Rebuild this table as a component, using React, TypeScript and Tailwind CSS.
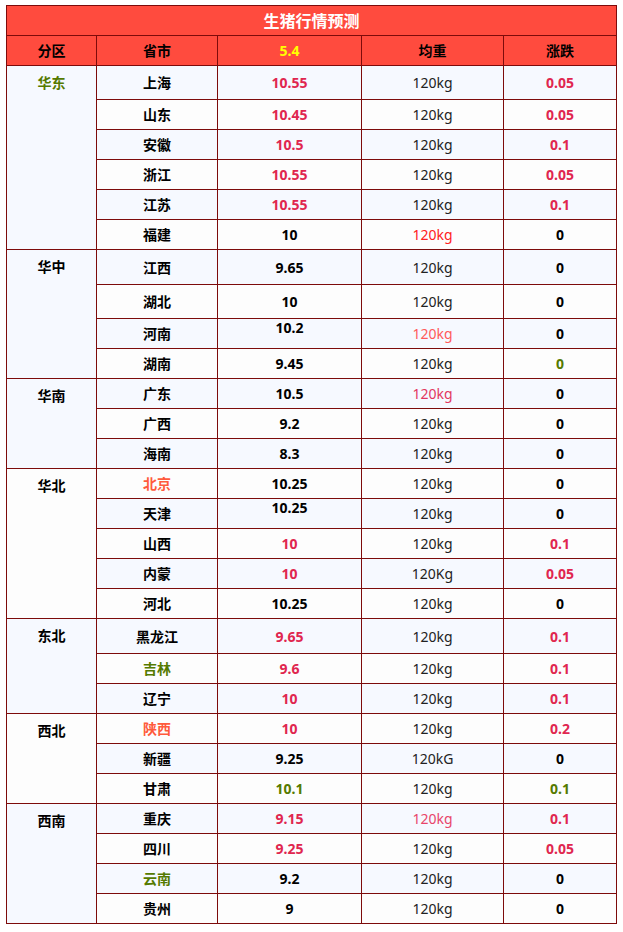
type Row = {
  p: string;
  pc?: string;
  price: string;
  prc?: string;
  w?: string;
  wc?: string;
  ch: string;
  chc?: string;
  h?: string;
  up?: boolean;
};

type Region = { name: string; color?: string; rows: Row[] };

const R = "text-[#e0264f]";
const G = "text-[#557a00]";
const DARK = "text-black";

const regions: Region[] = [
  {
    name: "华东",
    color: G,
    rows: [
      { p: "上海", price: "10.55", prc: R, ch: "0.05", chc: R, h: "h-[34px]" },
      { p: "山东", price: "10.45", prc: R, ch: "0.05", chc: R },
      { p: "安徽", price: "10.5", prc: R, ch: "0.1", chc: R },
      { p: "浙江", price: "10.55", prc: R, ch: "0.05", chc: R },
      { p: "江苏", price: "10.55", prc: R, ch: "0.1", chc: R },
      { p: "福建", price: "10", wc: "text-[#ff2020]", ch: "0" },
    ],
  },
  {
    name: "华中",
    rows: [
      { p: "江西", price: "9.65", ch: "0", h: "h-[35px]" },
      { p: "湖北", price: "10", ch: "0", h: "h-[34px]" },
      { p: "河南", price: "10.2", up: true, wc: "text-[#ff5a5a]", ch: "0" },
      { p: "湖南", price: "9.45", ch: "0", chc: G },
    ],
  },
  {
    name: "华南",
    rows: [
      { p: "广东", price: "10.5", wc: "text-[#e2375e]", ch: "0" },
      { p: "广西", price: "9.2", ch: "0" },
      { p: "海南", price: "8.3", ch: "0" },
    ],
  },
  {
    name: "华北",
    rows: [
      { p: "北京", pc: "text-[#ff5a3c]", price: "10.25", ch: "0" },
      { p: "天津", price: "10.25", up: true, ch: "0" },
      { p: "山西", price: "10", prc: R, ch: "0.1", chc: R },
      { p: "内蒙", price: "10", prc: R, w: "120Kg", ch: "0.05", chc: R },
      { p: "河北", price: "10.25", ch: "0" },
    ],
  },
  {
    name: "东北",
    rows: [
      { p: "黑龙江", price: "9.65", prc: R, ch: "0.1", chc: R, h: "h-[35px]" },
      { p: "吉林", pc: G, price: "9.6", prc: R, ch: "0.1", chc: R },
      { p: "辽宁", price: "10", prc: R, ch: "0.1", chc: R },
    ],
  },
  {
    name: "西北",
    rows: [
      { p: "陕西", pc: "text-[#ff5a3c]", price: "10", prc: R, ch: "0.2", chc: R },
      { p: "新疆", price: "9.25", w: "120kG", ch: "0" },
      { p: "甘肃", price: "10.1", prc: G, ch: "0.1", chc: G },
    ],
  },
  {
    name: "西南",
    rows: [
      { p: "重庆", price: "9.15", prc: R, wc: "text-[#e8456a]", ch: "0.1", chc: R },
      { p: "四川", price: "9.25", prc: R, ch: "0.05", chc: R },
      { p: "云南", pc: G, price: "9.2", ch: "0" },
      { p: "贵州", price: "9", ch: "0" },
    ],
  },
];

const cell = "border border-[#7d0b0b] text-center align-middle p-0";

export default function App() {
  let idx = 0;
  return (
    <div
      className="min-h-screen bg-white pl-[6px] pt-[5px]"
      style={{ fontFamily: '"Noto Sans", "Noto Sans CJK SC", sans-serif' }}
    >
      <table className="border-collapse table-fixed w-[610px] text-[14px] leading-[18px]">
        <colgroup>
          <col className="w-[90px]" />
          <col className="w-[121px]" />
          <col className="w-[144px]" />
          <col className="w-[142px]" />
          <col className="w-[113px]" />
        </colgroup>
        <thead>
          <tr className="h-[30px] bg-[#ff4b3e]">
            <th colSpan={5} className={`${cell} text-white text-[16px] font-bold`}>
              生猪行情预测
            </th>
          </tr>
          <tr className="h-[30px] bg-[#ff4b3e] text-black font-bold">
            <th className={cell}>分区</th>
            <th className={cell}>省市</th>
            <th className={`${cell} text-[#ffff00]`}>5.4</th>
            <th className={cell}>均重</th>
            <th className={cell}>涨跌</th>
          </tr>
        </thead>
        <tbody>
          {regions.map((reg) =>
            reg.rows.map((r, i) => {
              const bg = idx % 2 === 0 ? "bg-[#f6f9ff]" : "bg-[#fdfdfd]";
              idx++;
              return (
                <tr key={reg.name + r.p} className={`${r.h ?? "h-[30px]"} ${bg}`}>
                  {i === 0 && (
                    <td
                      rowSpan={reg.rows.length}
                      className={`${cell} !align-top pt-[8px] font-bold ${reg.color ?? DARK}`}
                    >
                      {reg.name}
                    </td>
                  )}
                  <td className={`${cell} pt-[1px] font-bold ${r.pc ?? DARK}`}>{r.p}</td>
                  <td className={`${cell} font-bold ${r.prc ?? DARK} ${r.up ? "pb-[11px]" : "pt-[1px]"}`}>
                    {r.price}
                  </td>
                  <td className={`${cell} pt-[1px] ${r.wc ?? "text-[#222]"}`}>{r.w ?? "120kg"}</td>
                  <td className={`${cell} pt-[1px] font-bold ${r.chc ?? DARK}`}>{r.ch}</td>
                </tr>
              );
            })
          )}
        </tbody>
      </table>
    </div>
  );
}
